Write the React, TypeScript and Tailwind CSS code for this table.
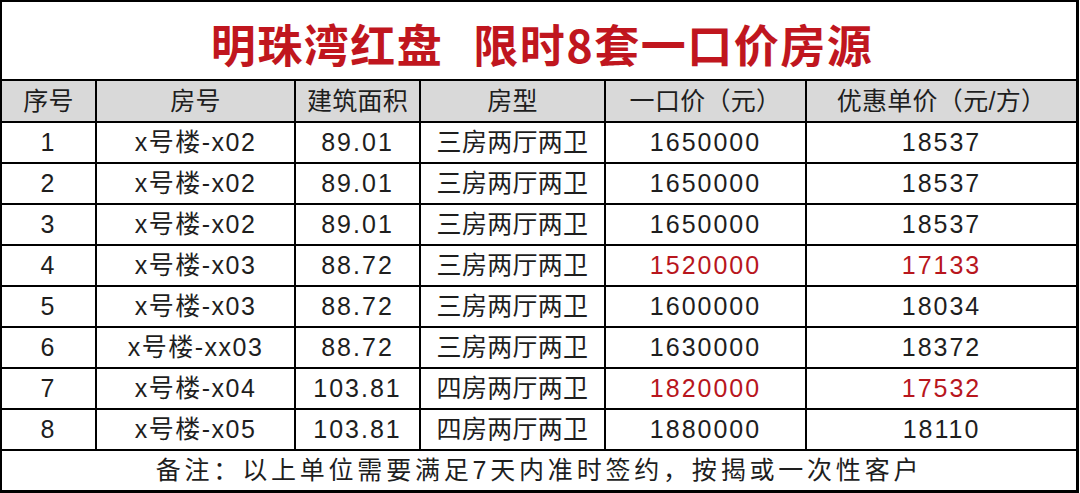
const headers = ["序号", "房号", "建筑面积", "房型", "一口价（元）", "优惠单价（元/方）"];

type Row = {
  no: string;
  room: string;
  area: string;
  layout: string;
  price: string;
  unit: string;
  hot?: boolean;
};

const rows: Row[] = [
  { no: "1", room: "x号楼-x02", area: "89.01", layout: "三房两厅两卫", price: "1650000", unit: "18537" },
  { no: "2", room: "x号楼-x02", area: "89.01", layout: "三房两厅两卫", price: "1650000", unit: "18537" },
  { no: "3", room: "x号楼-x02", area: "89.01", layout: "三房两厅两卫", price: "1650000", unit: "18537" },
  { no: "4", room: "x号楼-x03", area: "88.72", layout: "三房两厅两卫", price: "1520000", unit: "17133", hot: true },
  { no: "5", room: "x号楼-x03", area: "88.72", layout: "三房两厅两卫", price: "1600000", unit: "18034" },
  { no: "6", room: "x号楼-xx03", area: "88.72", layout: "三房两厅两卫", price: "1630000", unit: "18372" },
  { no: "7", room: "x号楼-x04", area: "103.81", layout: "四房两厅两卫", price: "1820000", unit: "17532", hot: true },
  { no: "8", room: "x号楼-x05", area: "103.81", layout: "四房两厅两卫", price: "1880000", unit: "18110" },
];

const font = "font-['Liberation_Sans','Noto_Sans_CJK_SC',sans-serif]";

type Kind = "num" | "mix" | "cjk";

const track: Record<Kind, string> = {
  num: "tracking-[2px]",
  mix: "tracking-[1.5px]",
  cjk: "tracking-[0.3px]",
};

const Cell = ({
  children,
  red,
  gray,
  kind = "num",
}: {
  children: string;
  red?: boolean;
  gray?: boolean;
  kind?: Kind;
}) => (
  <div
    className={`flex items-center justify-center text-[25px] leading-none ${track[kind]} ${
      gray ? "bg-[#d9d9d9]" : "bg-white"
    } ${red ? "text-[#b8161d]" : "text-[#1e1e1e]"}`}
  >
    {children}
  </div>
);

export default function App() {
  return (
    <div className={`w-[1080px] h-[493px] bg-white ${font}`}>
      <div className="w-[1079px] grid grid-cols-[93px_197px_123px_183px_199px_269px] grid-rows-[77px_40px_repeat(8,39px)_39px] gap-[2px] bg-black pt-[2px] pl-[2px] pr-[3px] pb-[3px]">
        <div className="col-span-6 bg-white flex items-center justify-center pt-[5px] pl-[6px]">
          <h1 className="flex gap-[30px] font-['Noto_Sans_CJK_SC',sans-serif] font-bold text-[45px] tracking-[1.5px] leading-none text-[#c0161e]">
            <span>明珠湾红盘</span>
            <span>限时8套一口价房源</span>
          </h1>
        </div>

        {headers.map((h) => (
          <Cell key={h} gray kind="cjk">
            {h}
          </Cell>
        ))}

        {rows.map((r) => [
          <Cell key={r.no + "a"}>{r.no}</Cell>,
          <Cell key={r.no + "b"} kind="mix">
            {r.room}
          </Cell>,
          <Cell key={r.no + "c"}>{r.area}</Cell>,
          <Cell key={r.no + "d"} kind="cjk">
            {r.layout}
          </Cell>,
          <Cell key={r.no + "e"} red={r.hot}>
            {r.price}
          </Cell>,
          <Cell key={r.no + "f"} red={r.hot}>
            {r.unit}
          </Cell>,
        ])}

        <div className="col-span-6 bg-white flex items-center justify-center text-[25px] tracking-[3.8px] leading-none text-[#1e1e1e]">
          备注：以上单位需要满足7天内准时签约，按揭或一次性客户
        </div>
      </div>
    </div>
  );
}
